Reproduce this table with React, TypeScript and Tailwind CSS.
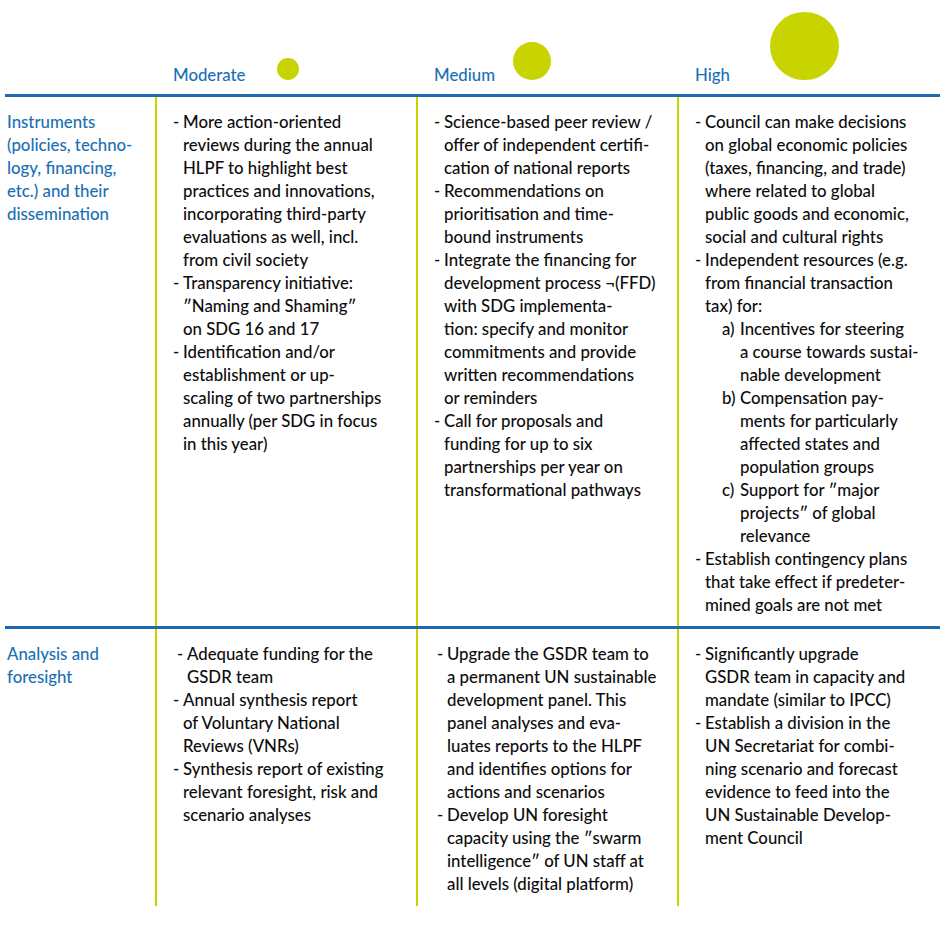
import React from "react";

type Item = { lines: string[]; sub?: { label: string; lines: string[] }[]; extra?: number };

const row1: Item[][] = [
  [
    { lines: ["More action-oriented", "reviews during the annual", "HLPF to highlight best", "practices and innovations,", "incorporating third-party", "evaluations as well, incl.", "from civil society"] },
    { lines: ["Transparency initiative:", "″Naming and Shaming″", "on SDG 16 and 17"] },
    { lines: ["Identification and/or", "establishment or up-", "scaling of two partnerships", "annually (per SDG in focus", "in this year)"] },
  ],
  [
    { lines: ["Science-based peer review /", "offer of independent certifi-", "cation of national reports"] },
    { lines: ["Recommendations on", "prioritisation and time-", "bound instruments"] },
    { lines: ["Integrate the financing for", "development process ¬(FFD)", "with SDG implementa-", "tion: specify and monitor", "commitments and provide", "written recommendations", "or reminders"] },
    { lines: ["Call for proposals and", "funding for up to six", "partnerships per year on", "transformational pathways"] },
  ],
  [
    { lines: ["Council can make decisions", "on global economic policies", "(taxes, financing, and trade)", "where related to global", "public goods and economic,", "social and cultural rights"] },
    {
      lines: ["Independent resources (e.g.", "from financial transaction", "tax) for:"],
      sub: [
        { label: "a)", lines: ["Incentives for steering", "a course towards sustai-", "nable development"] },
        { label: "b)", lines: ["Compensation pay-", "ments for particularly", "affected states and", "population groups"] },
        { label: "c)", lines: ["Support for ″major", "projects″ of global", "relevance"] },
      ],
    },
    { lines: ["Establish contingency plans", "that take effect if predeter-", "mined goals are not met"] },
  ],
];

const row2: Item[][] = [
  [
    { lines: ["Adequate funding for the", "GSDR team"], extra: 4 },
    { lines: ["Annual synthesis report", "of Voluntary National", "Reviews (VNRs)"] },
    { lines: ["Synthesis report of existing", "relevant foresight, risk and", "scenario analyses"] },
  ],
  [
    { lines: ["Upgrade the GSDR team to", "a permanent UN sustainable", "development panel. This", "panel analyses and eva-", "luates reports to the HLPF", "and identifies options for", "actions and scenarios"], extra: 3 },
    { lines: ["Develop UN foresight", "capacity using the ″swarm", "intelligence″ of UN staff at", "all levels (digital platform)"], extra: 3 },
  ],
  [
    { lines: ["Significantly upgrade", "GSDR team in capacity and", "mandate (similar to IPCC)"] },
    { lines: ["Establish a division in the", "UN Secretariat for combi-", "ning scenario and forecast", "evidence to feed into the", "UN Sustainable Develop-", "ment Council"] },
  ],
];

function Lines({ lines }: { lines: string[] }) {
  return (
    <div>
      {lines.map((l, i) => (
        <div key={i} className="whitespace-nowrap">
          {l}
        </div>
      ))}
    </div>
  );
}

function Bullet({ item }: { item: Item }) {
  return (
    <div>
      <div className="flex" style={item.extra ? { paddingLeft: item.extra } : undefined}>
        <div className="w-[10px] shrink-0">-</div>
        <Lines lines={item.lines} />
      </div>
      {item.sub &&
        item.sub.map((s, i) => (
          <div key={i} className="flex pl-[27px]">
            <div className="w-[18px] shrink-0">{s.label}</div>
            <Lines lines={s.lines} />
          </div>
        ))}
    </div>
  );
}

function Cell({ items }: { items: Item[] }) {
  return (
    <div className="border-l-2 border-[#c8d400] pl-[16px] pt-[13px]">
      {items.map((it, i) => (
        <Bullet key={i} item={it} />
      ))}
    </div>
  );
}

export default function App() {
  return (
    <div
      className="w-[945px] h-[927px] bg-white text-[#0d0d0d] text-[16.8px] leading-[23px] font-medium"
      style={{ fontFamily: "Lato, 'Open Sans', sans-serif" }}
    >
      <div className="pl-[5px] pr-[5px]">
        <div className="grid grid-cols-[150px_261px_261px_263px] h-[94px]">
          <div />
          <div className="flex items-end pl-[18px] pb-[8px]">
            <div className="text-[#1b6fb5] leading-[23px]">Moderate</div>
            <div className="ml-[32px] mb-[6px] w-[22px] h-[22px] rounded-full bg-[#c8d400]" />
          </div>
          <div className="flex items-end pl-[18px] pb-[8px]">
            <div className="text-[#1b6fb5] leading-[23px]">Medium</div>
            <div className="ml-[18px] mb-[6px] w-[38px] h-[38px] rounded-full bg-[#c8d400]" />
          </div>
          <div className="flex items-end pl-[18px] pb-[8px]">
            <div className="text-[#1b6fb5] leading-[23px]">High</div>
            <div className="ml-[40px] mb-[6px] w-[69px] h-[68px] rounded-full bg-[#c8d400]" />
          </div>
        </div>
        <div className="h-[3px] bg-[#1f69b1]" />
        <div className="grid grid-cols-[150px_261px_261px_263px] h-[529px]">
          <div className="pl-[2px] pt-[13px] text-[#1b6fb5]">
            <Lines lines={["Instruments", "(policies, techno-", "logy, financing,", "etc.) and their", "dissemination"]} />
          </div>
          {row1.map((c, i) => (
            <Cell key={i} items={c} />
          ))}
        </div>
        <div className="h-[3px] bg-[#1f69b1]" />
        <div className="grid grid-cols-[150px_261px_261px_263px] h-[277px]">
          <div className="pl-[2px] pt-[13px] text-[#1b6fb5]">
            <Lines lines={["Analysis and", "foresight"]} />
          </div>
          {row2.map((c, i) => (
            <Cell key={i} items={c} />
          ))}
        </div>
      </div>
    </div>
  );
}
